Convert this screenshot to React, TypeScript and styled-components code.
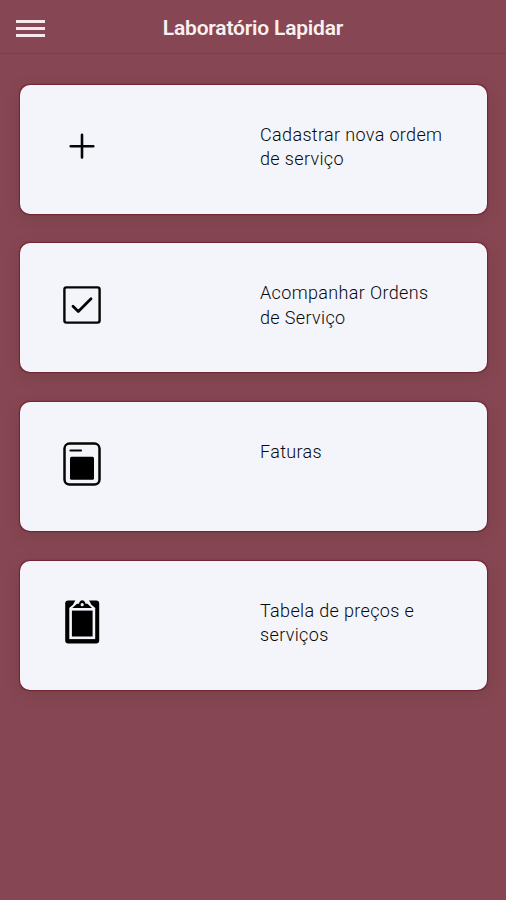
import React from 'react';
import styled, { createGlobalStyle } from 'styled-components';

const GlobalStyle = createGlobalStyle`
  * { box-sizing: border-box; }
  body { margin: 0; background: #874653; }
`;

const Page = styled.div`
  min-height: 900px;
  background: #874653;
  font-family: Roboto, 'Liberation Sans', sans-serif;
`;

const Toolbar = styled.header`
  display: grid;
  grid-template-columns: 80px 1fr 80px;
  align-items: center;
  height: 54px;
  padding-top: 3px;
  border-bottom: 1px solid #7b3e4a;
`;

const MenuButton = styled.button`
  display: flex;
  flex-direction: column;
  gap: 4px;
  width: 29px;
  margin: 0 0 0 16px;
  padding: 0;
  border: 0;
  background: none;
`;

const MenuLine = styled.span`
  height: 3px;
  background: #f7e9eb;
`;

const Title = styled.h1`
  margin: 0;
  font-size: 21px;
  font-weight: 600;
  line-height: 26px;
  letter-spacing: -0.2px;
  text-align: center;
  white-space: nowrap;
  color: #faf0ef;
`;

const CardList = styled.main`
  display: flex;
  flex-direction: column;
  gap: 29.8px;
  padding: 30.5px 19px 0 20px;
`;

const Card = styled.a`
  display: grid;
  grid-template-columns: 240px 1fr;
  height: 129px;
  padding-top: 37.5px;
  border-radius: 10px;
  background: #f4f5fa;
  box-shadow: 0 4px 16px rgba(50, 55, 20, 0.2), 0 0 1px 0.5px rgba(112, 14, 40, 0.65);
`;

const Icon = styled.svg`
  width: 48px;
  height: 48px;
  margin-left: 38px;
  fill: none;
  stroke: #050505;
`;

const Label = styled.p`
  margin: 0;
  width: 188px;
  padding-top: 0.5px;
  font-size: 18px;
  line-height: 24.4px;
  letter-spacing: 0.35px;
  font-weight: 300;
  color: #08090b;
`;

const PlusIcon = () => (
  <Icon viewBox="0 0 48 48">
    <path d="M24 12.9v22.6M12.7 24.2h22.6" strokeWidth="2.6" strokeLinecap="round" />
  </Icon>
);

const CheckIcon = () => (
  <Icon viewBox="0 0 48 48">
    <rect x="6.4" y="6.4" width="35.2" height="35.2" rx="2" strokeWidth="2.4" />
    <path d="M15 25.2l5.3 5.2L33 17.8" strokeWidth="2.8" strokeLinecap="round" strokeLinejoin="round" />
  </Icon>
);

const InvoiceIcon = () => (
  <Icon viewBox="0 0 48 48">
    <rect x="6.5" y="3.6" width="35" height="41" rx="5" strokeWidth="2.5" />
    <path d="M12.5 10.5h10.5" strokeWidth="2.2" strokeLinecap="round" />
    <rect x="12" y="16.8" width="24" height="23" rx="1.5" fill="#000" stroke="none" />
  </Icon>
);

const ClipboardIcon = () => (
  <Icon viewBox="0 0 48 48">
    <rect x="7.2" y="2.4" width="34" height="43" rx="3" fill="#000" stroke="none" />
    <path d="M17.8 1.5h12.8l2.8 5.2 4.2 3.5H10.8l4.2-3.5z" fill="#f4f5fa" stroke="none" />
    <path d="M14 10.3l5-4.5h2c.6-4.7 5.9-4.7 6.5 0h2l4.8 4.5z" fill="#000" stroke="none" />
    <circle cx="24.2" cy="6.7" r="1.6" fill="#f4f5fa" stroke="none" />
    <rect x="12.6" y="11.3" width="23.3" height="28.5" fill="#000" stroke="#f4f5fa" strokeWidth="2.6" />
  </Icon>
);

const items = [
  { label: 'Cadastrar nova ordem de serviço', Glyph: PlusIcon },
  { label: 'Acompanhar Ordens de Serviço', Glyph: CheckIcon },
  { label: 'Faturas', Glyph: InvoiceIcon },
  { label: 'Tabela de preços e serviços', Glyph: ClipboardIcon },
];

export default function App() {
  return (
    <Page>
      <GlobalStyle />
      <Toolbar>
        <MenuButton aria-label="Menu">
          <MenuLine />
          <MenuLine />
          <MenuLine />
        </MenuButton>
        <Title>Laboratório Lapidar</Title>
      </Toolbar>
      <CardList>
        {items.map(({ label, Glyph }) => (
          <Card key={label}>
            <Glyph />
            <Label>{label}</Label>
          </Card>
        ))}
      </CardList>
    </Page>
  );
}
